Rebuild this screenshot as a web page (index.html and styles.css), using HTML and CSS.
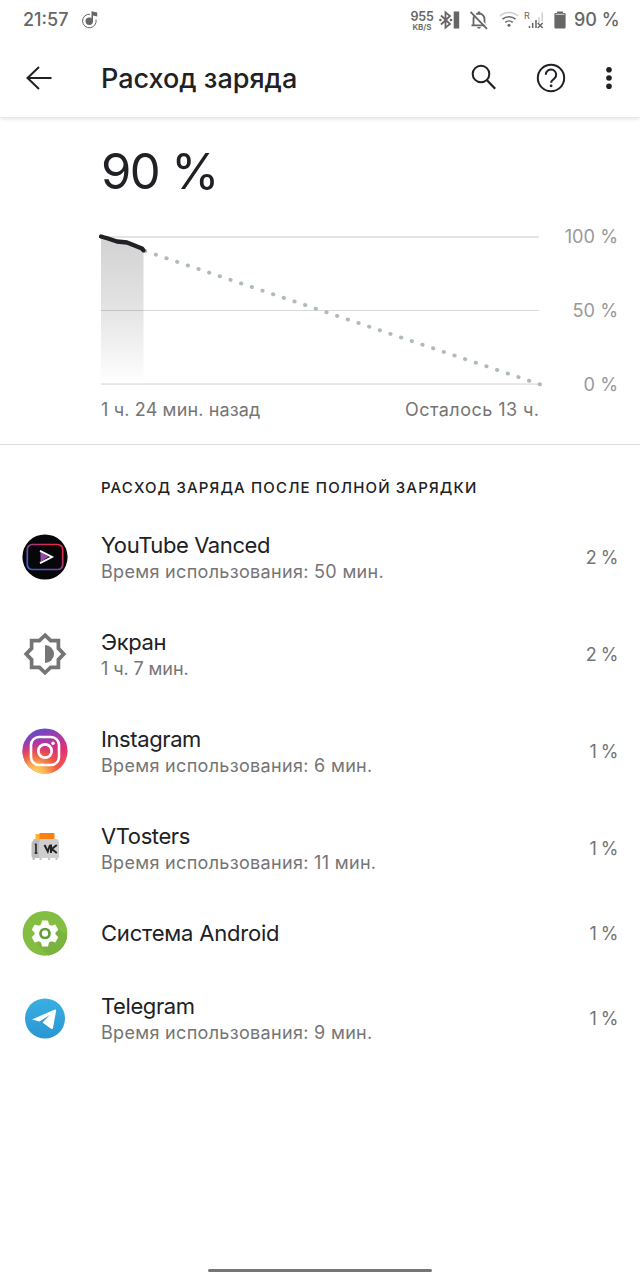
FILE: index.html
```html
<!DOCTYPE html>
<html lang="ru">
<head>
    <meta charset="UTF-8">
    <title>Расход заряда</title>
    <link rel="stylesheet" href="styles.css">
</head>
<body>

<div class="statusbar">
    <span class="clock">21:57</span>
    <svg class="note" width="18" height="20" viewBox="0 0 18 20">
        <path d="M8 4.2A6.8 6.8 0 1 0 14 9.5" fill="none" stroke="#666" stroke-width="1"/>
        <circle cx="7.3" cy="11.3" r="3.7" fill="#666"/>
        <path d="M9.5 11V1.2l5.7 1.2v4l-4.2-1V11z" fill="#666"/>
    </svg>
    <div class="speed"><b>955</b><span>KB/S</span></div>
    <svg class="bt" width="21" height="20" viewBox="0 0 21 20">
        <path d="M2 5.5l9 8.5-4.5 3.7V2.3L11 6l-9 8.5" fill="none" stroke="#666" stroke-width="1.8"/>
        <circle cx="1.4" cy="10" r="1.3" fill="#666"/>
        <circle cx="12" cy="10" r="1.3" fill="#666"/>
        <rect x="14.7" y="1.5" width="5.5" height="17" fill="#666"/>
    </svg>
    <svg class="bell" width="20" height="20" viewBox="0 0 20 20">
        <path d="M4.5 15V9a5.5 5.5 0 0 1 11 0v6M2.5 15.3h15" fill="none" stroke="#666" stroke-width="1.8"/>
        <path d="M8.2 17h3.6a1.8 1.8 0 0 1-3.6 0zM8.8 1.5h2.4v3H8.8z" fill="#666"/>
        <path d="M3.2 1.2l16 16.6" stroke="#fff" stroke-width="1.6"/>
        <path d="M1.5 1.8l16.5 17" stroke="#666" stroke-width="1.8"/>
    </svg>
    <svg class="wifi" width="20" height="17" viewBox="0 0 20 17">
        <path d="M1 5a13.5 13.5 0 0 1 18 0" fill="none" stroke="#ccc" stroke-width="1.5"/>
        <path d="M3.5 8.2a9.8 9.8 0 0 1 13 0M6.3 11.4a5.6 5.6 0 0 1 7.4 0" fill="none" stroke="#666" stroke-width="1.6"/>
        <circle cx="10" cy="14.2" r="1.5" fill="#666"/>
    </svg>
    <div class="cell">
        <span>R</span>
        <svg width="16" height="18" viewBox="0 0 16 18">
            <path d="M1.5 15v2M4.7 12v5M8 9v8" stroke="#666" stroke-width="1.5"/>
            <path d="M11 6v6M14.2 1.5v9" stroke="#ccc" stroke-width="1.4"/>
            <path d="M9.7 12l5 5M14.7 12l-5 5" stroke="#666" stroke-width="1.4"/>
        </svg>
    </div>
    <svg class="battery" width="12" height="18" viewBox="0 0 12 18">
        <path d="M3 .4h6v1.5h1.4q1.2 0 1.2 1.2v13.2q0 1.3-1.3 1.3H1.7q-1.3 0-1.3-1.3V3.1q0-1.2 1.2-1.2H3z" fill="#666"/>
        <path d="M1.6 3.3h8.8" stroke="#ddd" stroke-width="1"/>
    </svg>
    <span class="level">90 %</span>
</div>

<header class="appbar">
    <svg class="back" width="28" height="28" viewBox="0 0 28 28">
        <path d="M26.5 14H2.5M14 3L2.5 14 14 25" fill="none" stroke="#202124" stroke-width="2"/>
    </svg>
    <h1>Расход заряда</h1>
    <svg class="search" width="28" height="28" viewBox="0 0 28 28">
        <circle cx="10" cy="10" r="8.3" fill="none" stroke="#202124" stroke-width="2"/>
        <path d="M15.5 15.8l8.7 8.9" stroke="#202124" stroke-width="2.3"/>
    </svg>
    <svg class="help" width="30" height="30" viewBox="0 0 30 30">
        <circle cx="15" cy="15" r="13.2" fill="none" stroke="#202124" stroke-width="2"/>
        <path d="M9.8 11.8a5.2 5.2 0 1 1 8.6 3.8c-2 1.7-3.3 2.2-3.3 4.2" fill="none" stroke="#202124" stroke-width="2"/>
        <circle cx="15.1" cy="22.8" r="1.4" fill="#202124"/>
    </svg>
    <svg class="more" width="6" height="24" viewBox="0 0 6 24">
        <circle cx="3" cy="3.7" r="2.8" fill="#202124"/>
        <circle cx="3" cy="12" r="2.8" fill="#202124"/>
        <circle cx="3" cy="20.3" r="2.8" fill="#202124"/>
    </svg>
</header>

<section class="summary">
    <div class="percent">90 %</div>
    <div class="graph">
        <svg width="440" height="150" viewBox="0 0 440 150">
            <defs>
                <linearGradient id="fade" x1="0" y1="0" x2="0" y2="1">
                    <stop offset="0" stop-color="#d2d2d2"/>
                    <stop offset=".45" stop-color="#e2e2e2"/>
                    <stop offset="1" stop-color="#fff"/>
                </linearGradient>
            </defs>
            <path d="M0 2L16 6.5 27 8 42.5 15.5V149H0z" fill="url(#fade)"/>
            <path d="M0 2h438M0 149.2h438" stroke="#e4e4e4" stroke-width="1.8"/>
            <path d="M0 75.5h438" stroke="#000" stroke-opacity=".15" stroke-width="1"/>
            <path d="M439 149.4L44 16" fill="none" stroke="#b0bab9" stroke-width="3.8" stroke-linecap="round" stroke-dasharray=".4 10.857"/>
            <path d="M0 1.5L7 3.5 16 6.5 26 7.5 36 11.5 41 13.5 42.5 15.3" fill="none" stroke="#202124" stroke-width="4.3" stroke-linecap="round" stroke-linejoin="round"/>
        </svg>
        <div class="scale">
            <span>100 %</span>
            <span>50 %</span>
            <span>0 %</span>
        </div>
    </div>
    <div class="period">
        <span class="ago">1 ч. 24 мин. назад</span>
        <span class="left">Осталось 13 ч.</span>
    </div>
</section>

<h2>Расход заряда после полной зарядки</h2>

<div class="app">
    <svg class="icon" width="46" height="46" viewBox="0 0 46 46">
        <defs>
            <linearGradient id="vanced" x1="0" y1="1" x2="1" y2="0">
                <stop offset=".15" stop-color="#3a62c8"/>
                <stop offset=".5" stop-color="#90408c"/>
                <stop offset=".8" stop-color="#e02a45"/>
            </linearGradient>
        </defs>
        <circle cx="23" cy="23" r="22.6" fill="#07070b"/>
        <rect x="5.3" y="10.5" width="35.4" height="25" rx="5" fill="none" stroke="url(#vanced)" stroke-width="1.7"/>
        <path d="M18.5 18l8 4.8-8 5z" fill="#9a48b0"/>
        <path d="M18 16.8l12 6.2-12 6.2" fill="none" stroke="#fff" stroke-width="1.9"/>
    </svg>
    <div class="info">
        <div class="name">YouTube Vanced</div>
        <div class="time">Время использования: 50 мин.</div>
    </div>
    <div class="value">2 %</div>
</div>

<div class="app">
    <svg class="icon" width="46" height="46" viewBox="0 0 46 46">
        <path d="M23 4.2l5.6 5.4h7.8v7.8L41.8 23l-5.4 5.6v7.8h-7.8L23 41.8l-5.6-5.4H9.6v-7.8L4.2 23l5.4-5.6V9.6h7.8z" fill="none" stroke="#757575" stroke-width="3.7"/>
        <path d="M23 14a9 9 0 0 1 0 18z" fill="#757575"/>
    </svg>
    <div class="info">
        <div class="name">Экран</div>
        <div class="time short">1 ч. 7 мин.</div>
    </div>
    <div class="value">2 %</div>
</div>

<div class="app">
    <svg class="icon" width="46" height="46" viewBox="0 0 46 46">
        <defs>
            <linearGradient id="insta" x1=".3" y1="0" x2=".65" y2="1">
                <stop offset="0" stop-color="#5a50c8"/>
                <stop offset=".3" stop-color="#a838ac"/>
                <stop offset=".6" stop-color="#e03070"/>
                <stop offset="1" stop-color="#f06a48"/>
            </linearGradient>
            <radialGradient id="glow" cx=".3" cy="1.02" r=".75">
                <stop offset="0" stop-color="#ffdc70"/>
                <stop offset=".3" stop-color="#fcb050"/>
                <stop offset=".65" stop-color="#f05a40" stop-opacity=".8"/>
                <stop offset="1" stop-color="#e03070" stop-opacity="0"/>
            </radialGradient>
        </defs>
        <circle cx="23" cy="23" r="22.6" fill="url(#insta)"/>
        <circle cx="23" cy="23" r="22.6" fill="url(#glow)"/>
        <rect x="9" y="9" width="28" height="28" rx="8" fill="none" stroke="#fff" stroke-width="2.6"/>
        <circle cx="23" cy="23" r="6.7" fill="none" stroke="#fff" stroke-width="2.7"/>
        <circle cx="31" cy="15.2" r="1.7" fill="#fff"/>
    </svg>
    <div class="info">
        <div class="name">Instagram</div>
        <div class="time">Время использования: 6 мин.</div>
    </div>
    <div class="value">1 %</div>
</div>

<div class="app">
    <svg class="icon" width="46" height="46" viewBox="0 0 46 46">
        <path d="M13.5 9h5v8h-5z" fill="#fbb52c"/>
        <path d="M17.5 8h15v8h-15z" fill="#f98016"/>
        <path d="M12 14h6l-1 19h-5.500q-2 0-2-2V18z" fill="#bdbdbd"/>
        <path d="M18 14h15.500q3.500 0 3.500 4v15H17V18z" fill="#cecece"/>
        <path d="M10.500 33H13v2h-2.500zM17.500 33h2v2h-2zM26 33h2v2h-2zM33.500 33h2v2h-2z" fill="#c4c4c4"/>
        <path d="M14 19v9M12.700 19.300h2M12.700 28h2.600" stroke="#333" stroke-width="1.8"/>
        <path d="M22.500 20l3.300 6.500L28 20M29 19.500v8.500M34.800 20l-5 4 5 4" fill="none" stroke="#222" stroke-width="2"/>
    </svg>
    <div class="info">
        <div class="name">VTosters</div>
        <div class="time">Время использования: 11 мин.</div>
    </div>
    <div class="value">1 %</div>
</div>

<div class="app single">
    <svg class="icon" width="46" height="46" viewBox="0 0 46 46">
        <circle cx="23" cy="23.3" r="22.4" fill="#83bd41"/>
        <path d="M15 34l11.500 11.400A22.400 22.400 0 0 0 45.200 26L34 16z" fill="#7ab33e"/>
        <path d="M20 10.5h6l1 4 2.3 1.3 4-1.2 3 5.2-2.9 2.9v1.6l2.9 2.9-3 5.2-4-1.2-2.3 1.3-1 4h-6l-1-4-2.3-1.3-4 1.2-3-5.2 2.9-2.9v-1.6l-2.9-2.9 3-5.2 4 1.2L19 14.5z" fill="#fff"/>
        <circle cx="23" cy="23.5" r="4.5" fill="#fff" stroke="#5f9e3a" stroke-width="2.7"/>
    </svg>
    <div class="info">
        <div class="name">Система Android</div>
    </div>
    <div class="value">1 %</div>
</div>

<div class="app">
    <svg class="icon" width="46" height="46" viewBox="0 0 46 46">
        <defs>
            <linearGradient id="tg" x1="0" y1="0" x2="0" y2="1">
                <stop offset="0" stop-color="#3aaee2"/>
                <stop offset="1" stop-color="#2997d2"/>
            </linearGradient>
        </defs>
        <circle cx="23" cy="23.5" r="20" fill="url(#tg)"/>
        <path d="M10 24.5L32.8 14.5q1.5-.4 1.3 1.3L31 33q-.5 1.7-2 .7L20.500 27.500l7.500-7.700-10.500 6.700z" fill="#fff"/>
    </svg>
    <div class="info">
        <div class="name">Telegram</div>
        <div class="time">Время использования: 9 мин.</div>
    </div>
    <div class="value">1 %</div>
</div>

<div class="navbar"></div>

</body>
</html>
```
FILE: styles.css
```css
*{box-sizing:border-box}
body{
    margin:0;
    width:640px;
    height:1280px;
    background:#fff;
    color:#202124;
    font-family:Inter, "Open Sans", sans-serif;
    display:flex;
    flex-direction:column;
    overflow:hidden;
}
svg{
    display:block;
    flex:none;
    overflow:visible;
}
span,.percent,.name,.time,.value,h1,h2{white-space:nowrap}
.statusbar{
    height:39px;
    padding:0 21px 0 23px;
    display:flex;
    align-items:center;
    color:#666;
}
.clock{
    font-size:18px;
    font-weight:500;
    width:47px;
}
.note{margin-left:12px}
.speed{
    margin-left:auto;
    width:24px;
    text-align:center;
    padding-top:1px;
}
.speed b{
    display:block;
    font-size:12.5px;
    line-height:13px;
    font-weight:600;
    letter-spacing:-.2px;
}
.speed span{
    display:block;
    font-size:8px;
    line-height:8px;
    font-weight:600;
}
.bt{margin-left:5px}
.bell{margin-left:9px}
.wifi{margin-left:10px}
.cell{
    display:flex;
    align-items:flex-start;
    margin-left:5px;
}
.cell span{
    font-size:9px;
    line-height:9px;
    width:6px;
    margin-right:-2px;
}
.battery{margin-left:10px}
.level{
    font-size:18px;
    font-weight:500;
    width:45px;
    margin-left:8px;
}
.appbar{
    height:79px;
    display:flex;
    align-items:center;
    padding:0 28px 0 25px;
    border-bottom:1px solid #e8e8e8;
    box-shadow:0 3px 3px -1px rgba(0,0,0,.08);
}
h1{
    margin:0 auto 0 48px;
    font-size:27px;
    font-weight:500;
}
.help{margin-left:37px}
.more{margin-left:40px}
.summary{
    height:327px;
    padding:28px 22px 0 101px;
    border-bottom:1px solid #dedede;
}
.percent{
    height:52px;
    line-height:52px;
    font-size:49px;
    font-weight:400;
    letter-spacing:-1.6px;
}
.graph{
    display:flex;
    justify-content:space-between;
    margin-top:37px;
}
.scale{
    height:169px;
    margin-top:-9px;
    display:flex;
    flex-direction:column;
    justify-content:space-between;
    text-align:right;
    font-size:18.2px;
    line-height:21px;
    color:#999;
}
.period{
    width:438px;
    margin-top:3px;
    display:flex;
    justify-content:space-between;
    font-size:18px;
    line-height:24px;
    color:#757575;
}
.ago{letter-spacing:.15px}
.left{
    letter-spacing:.45px;
    margin-right:-.5px;
}
h2{
    margin:0 0 0 101px;
    height:63px;
    padding-top:33px;
    font-size:15px;
    line-height:20px;
    font-weight:500;
    letter-spacing:1.15px;
    text-transform:uppercase;
}
.app{
    height:97px;
    padding:0 22px;
    display:flex;
    align-items:center;
}
.app.single{height:73px}
.info{
    margin-left:33px;
    padding-top:2px;
    flex:1;
}
.name{
    font-size:22px;
    line-height:27px;
    letter-spacing:-.4px;
}
.single .name{letter-spacing:-.2px}
.time{
    font-size:18px;
    line-height:25px;
    letter-spacing:.32px;
    color:#757575;
}
.time.short{letter-spacing:-.1px}
.value{
    padding-top:2px;
    font-size:18px;
    letter-spacing:-.5px;
    color:#757575;
}
.navbar{
    width:224px;
    height:3px;
    margin:auto auto 8px;
    border-radius:2px;
    background:#757575;
}
```
